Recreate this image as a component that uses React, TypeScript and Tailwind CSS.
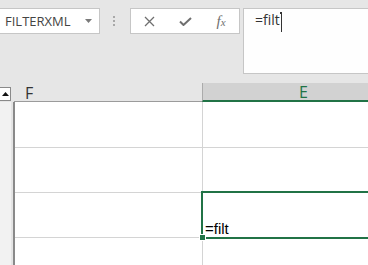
export default function App() {
  const rows = [46, 45, 45, 40];

  return (
    <div className="relative w-[368px] h-[265px] overflow-hidden bg-[#e6e6e6] font-['Open_Sans',sans-serif]">
      {/* formula bar */}
      <div className="flex h-[83px] items-start pt-[8px]">
        <div className="flex h-[26px] w-[100px] shrink-0 items-center justify-between border border-l-0 border-[#c6c6c6] bg-white pl-[5px] pr-[7px]">
          <span className="text-[13px] leading-[18px] text-[#444]">FILTERXML</span>
          <svg width="7" height="4" viewBox="0 0 7 4" className="mb-[1px]">
            <path d="M0 0 L7 0 L3.5 4 Z" fill="#7a7a7a" />
          </svg>
        </div>
        <div className="flex w-[30px] shrink-0 flex-col gap-[2px] pl-[13px] pt-[8px]">
          <div className="h-[2px] w-[2px] bg-[#a8a8a8]" />
          <div className="h-[2px] w-[2px] bg-[#a8a8a8]" />
          <div className="h-[2px] w-[2px] bg-[#a8a8a8]" />
        </div>
        <div className="grid h-[26px] w-[110px] shrink-0 grid-cols-3 border border-[#c6c6c6] bg-white">
          <div className="flex items-center justify-center">
            <svg width="11" height="11" viewBox="0 0 11 11">
              <path d="M1 1 L10 10 M10 1 L1 10" stroke="#6f6f6f" strokeWidth="1.3" />
            </svg>
          </div>
          <div className="flex items-center justify-center pt-[1px]">
            <svg width="13" height="9" viewBox="0 0 13 9">
              <path d="M1 4.5 L4.5 8 L12 1" stroke="#6f6f6f" strokeWidth="2" fill="none" />
            </svg>
          </div>
          <div className="flex items-center justify-center">
            <span className="font-['Liberation_Serif',serif] text-[15px] italic leading-none text-[#6f6f6f]">
              f<span className="text-[11px]">x</span>
            </span>
          </div>
        </div>
        <div className="ml-[3px] flex h-[66px] flex-1 items-start border border-r-0 border-[#c6c6c6] bg-[#fefefe] pl-[11px] pt-[1px]">
          <span className="text-[14px] leading-[19px] text-[#333]">=filt</span>
          <span className="relative ml-[1px] mt-[2px] inline-block h-[20px] w-[1px] bg-[#333]">
            <span className="absolute left-[-1px] top-0 h-[2px] w-[2px] bg-[#333]" />
          </span>
        </div>
      </div>

      {/* column headers */}
      <div className="flex h-[19px]">
        <div className="w-[15px] shrink-0 pt-[4px]">
          <div className="flex h-[14px] w-[11px] items-center justify-center border border-l-0 border-[#8a8a8a] bg-white">
            <svg width="7" height="4" viewBox="0 0 7 4">
              <path d="M0 4 L7 4 L3.5 0 Z" fill="#111" />
            </svg>
          </div>
        </div>
        <div className="-ml-[1px] w-[188px] shrink-0 border-b border-[#9b9b9b] pl-[11px] pt-[1px] text-[16px] leading-[18px] text-[#333]">
          F
        </div>
        <div className="flex-1 border-b-2 border-l border-b-[#217346] border-l-[#ababab] bg-[#d2d2d2] pl-[96px] pt-[1px] text-[16px] leading-[16px] text-[#217346]">
          E
        </div>
      </div>

      {/* grid */}
      <div className="flex flex-col">
        {rows.map((h, i) => (
          <div key={i} className="flex" style={{ height: h }}>
            <div className="flex w-[15px] shrink-0">
              <div className="w-[11px] bg-[#f2f2f2]" />
              <div className="w-[2px] bg-[#e4e4e4]" />
              <div className="w-[2px] bg-[#8a8a8a]" />
            </div>
            <div className={"w-[187px] shrink-0 bg-white" + (i < 3 ? " border-b border-[#d4d4d4]" : "")} />
            <div className={"flex flex-1 items-end border-l border-[#d4d4d4] bg-white pl-[2px]" + (i < 3 ? " border-b" : "")}>
              {i === 2 && (
                <span className="relative z-10 font-['Liberation_Sans',sans-serif] text-[15px] leading-[17px] text-black">=filt</span>
              )}
            </div>
          </div>
        ))}
      </div>

      {/* selection */}
      <div className="absolute left-[201px] top-[191px] h-[48px] w-[200px] border-2 border-[#217346]" />
      <div className="absolute left-[199px] top-[234px] h-[7px] w-[7px] border border-white bg-[#217346]" />
    </div>
  );
}
